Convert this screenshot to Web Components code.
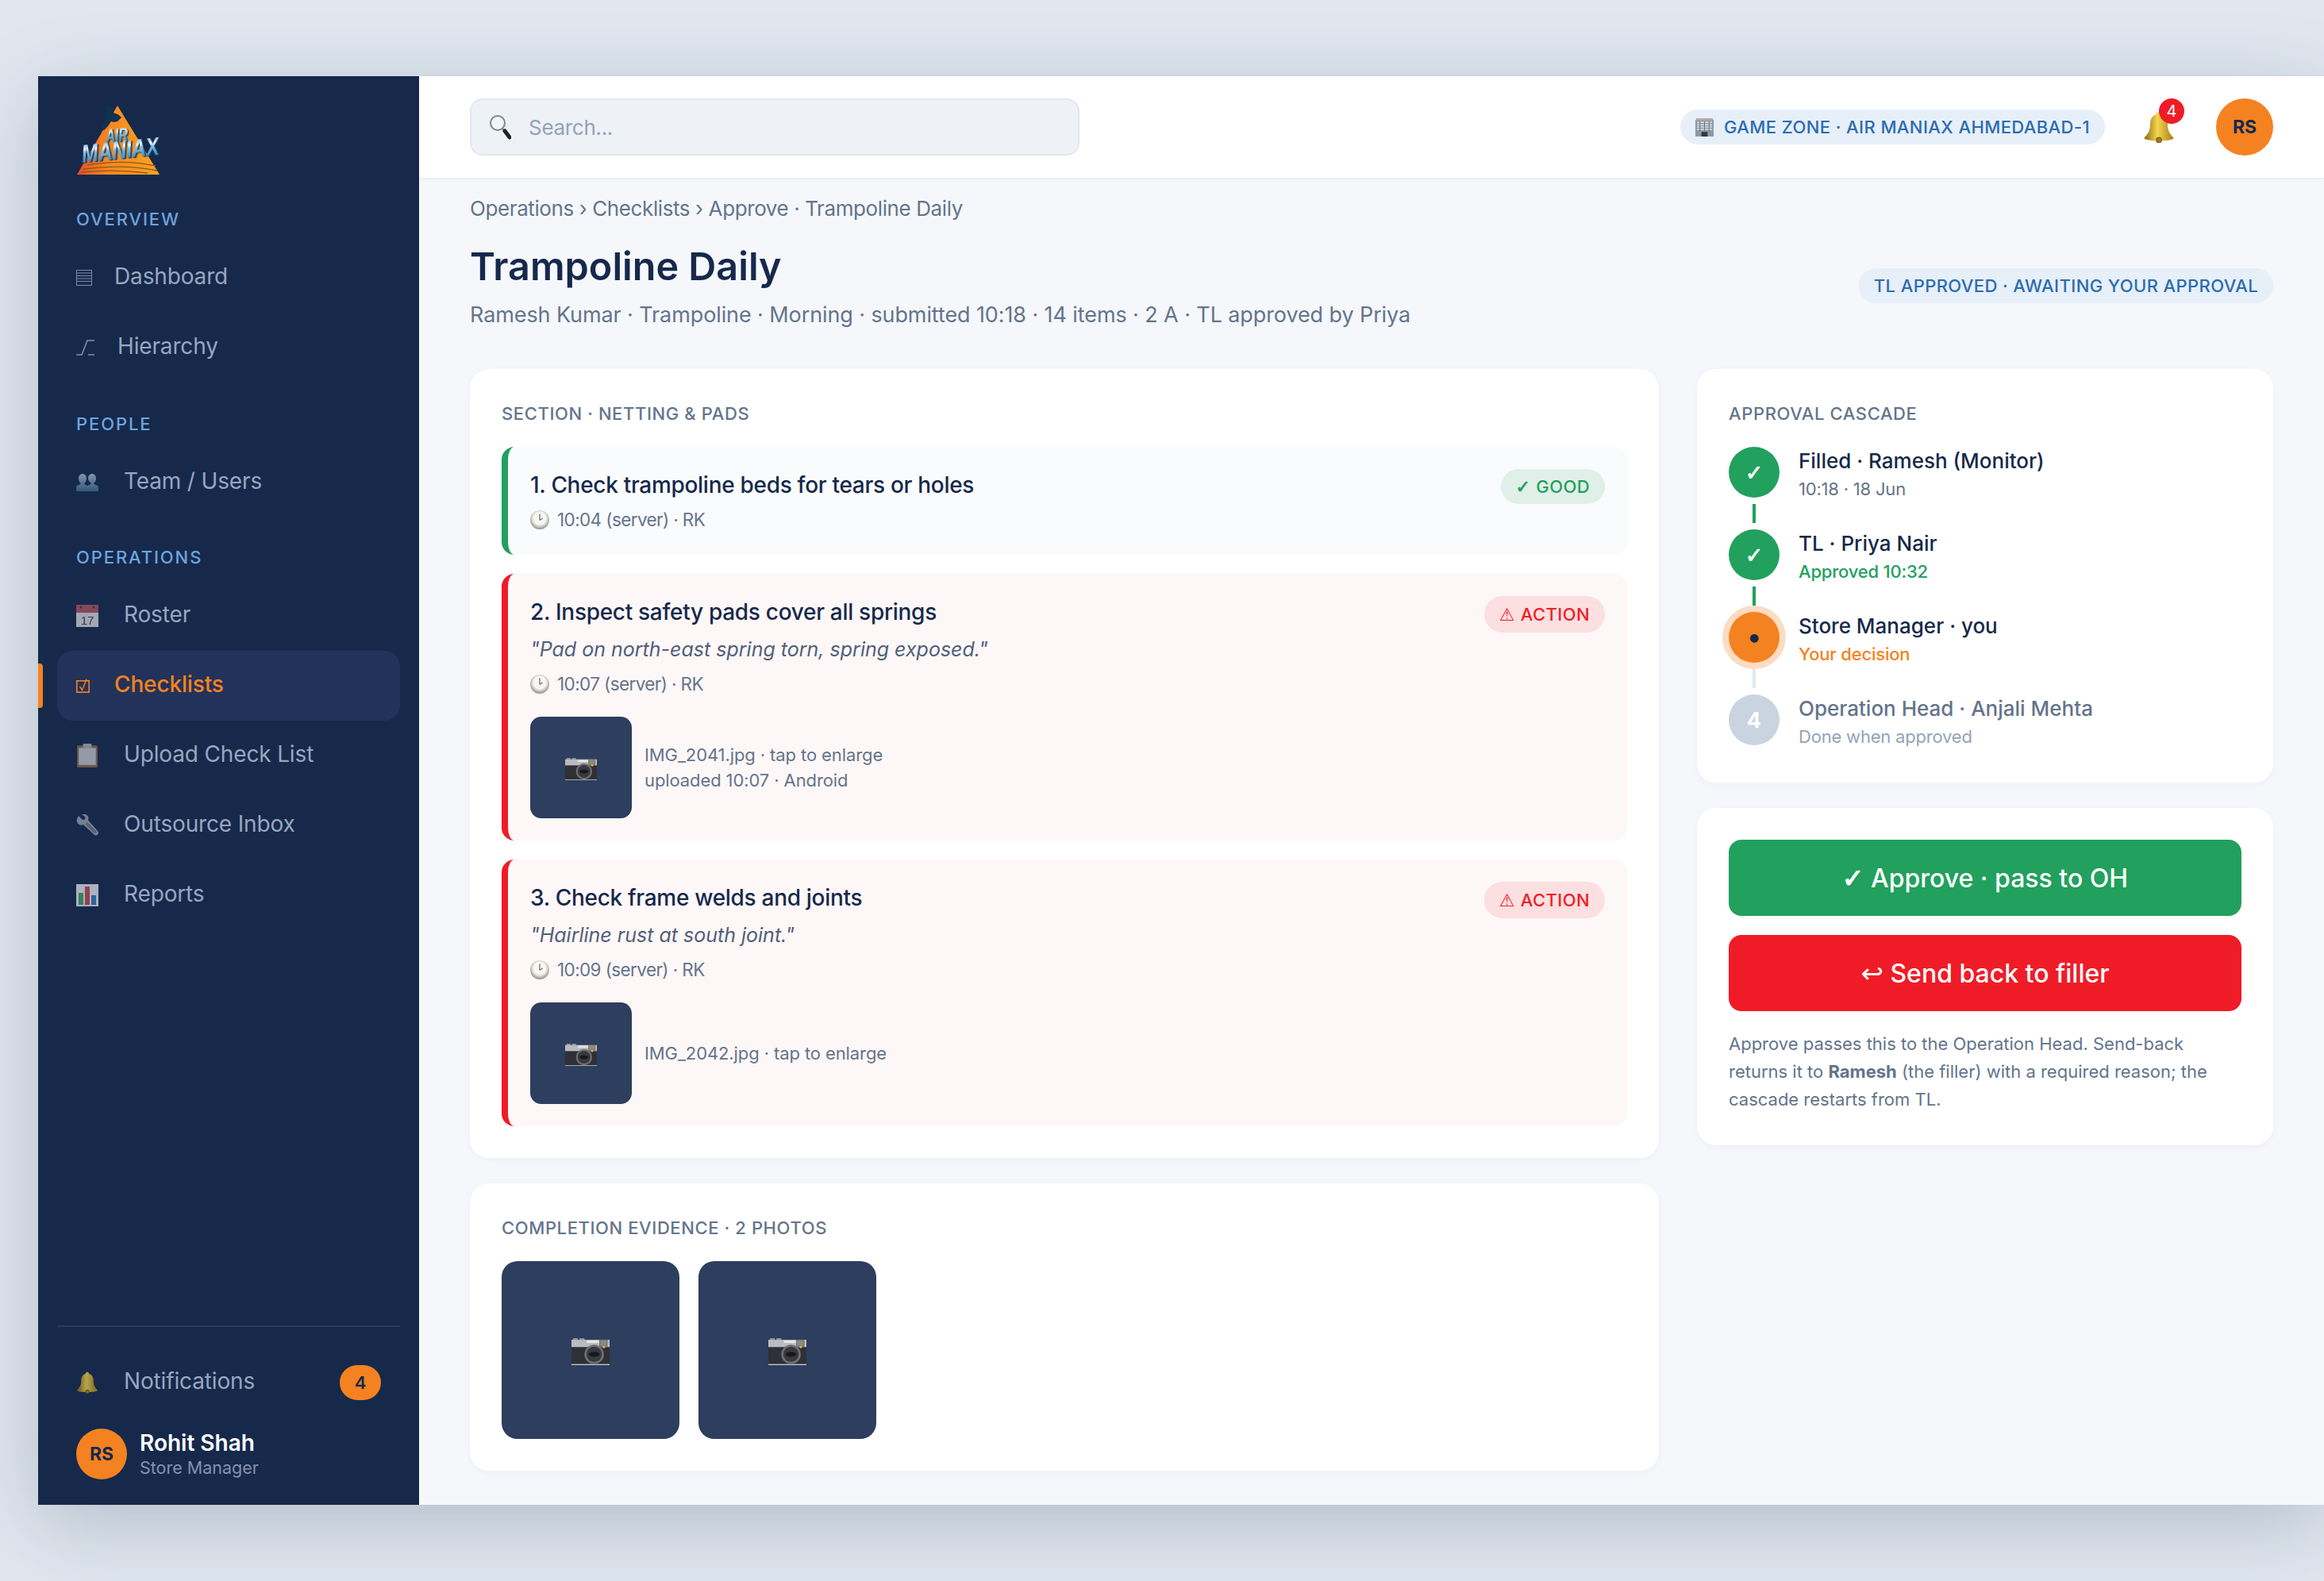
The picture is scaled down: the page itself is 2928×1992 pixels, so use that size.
<!DOCTYPE html>
<html lang="en">
<head>
<meta charset="utf-8">
<title>Trampoline Daily</title>
<style>
html, body { margin: 0; height: 1992px; overflow: hidden; }
body {
    background: #e0e7ef;
    font-family: "Inter", "Liberation Sans", sans-serif;
    color: #16294b;
}
</style>
</head>
<body>
<am-shell>
    <am-sidebar slot="side">
        <am-logo></am-logo>
        <am-nav-label>OVERVIEW</am-nav-label>
        <am-nav-item icon="dash" iw="28">Dashboard</am-nav-item>
        <am-nav-item icon="tree" iw="32">Hierarchy</am-nav-item>
        <am-nav-label>PEOPLE</am-nav-label>
        <am-nav-item icon="people">Team / Users</am-nav-item>
        <am-nav-label style="margin-top:38px">OPERATIONS</am-nav-label>
        <am-nav-item icon="calendar">Roster</am-nav-item>
        <am-nav-item icon="checkbox" iw="28" draw="18" active>Checklists</am-nav-item>
        <am-nav-item icon="clipboard">Upload Check List</am-nav-item>
        <am-nav-item icon="wrench">Outsource Inbox</am-nav-item>
        <am-nav-item icon="chart">Reports</am-nav-item>
        <am-nav-item slot="foot" icon="bell" badge="4">Notifications</am-nav-item>
        <am-user slot="foot" name="Rohit Shah" role="Store Manager"></am-user>
    </am-sidebar>

    <am-topbar slot="top">
        <am-pill slot="zone" tone="blue"><am-icon name="building" size="23" style="margin-right:13px"></am-icon>GAME ZONE · AIR MANIAX AHMEDABAD-1</am-pill>
    </am-topbar>

    <am-page-head crumbs="Operations › Checklists › Approve · Trampoline Daily" heading="Trampoline Daily" sub="Ramesh Kumar · Trampoline · Morning · submitted 10:18 · 14 items · 2 A · TL approved by Priya">
        <am-pill slot="status" tone="blue">TL APPROVED · AWAITING YOUR APPROVAL</am-pill>
    </am-page-head>

    <am-columns>
        <am-card heading="SECTION · NETTING &amp; PADS">
            <am-check-item tone="good" heading="1. Check trampoline beds for tears or holes" meta="10:04 (server) · RK"></am-check-item>
            <am-check-item tone="action" heading="2. Inspect safety pads cover all springs" quote="&quot;Pad on north-east spring torn, spring exposed.&quot;" meta="10:07 (server) · RK">
                <am-photo-row>IMG_2041.jpg · tap to enlarge<br>uploaded 10:07 · Android</am-photo-row>
            </am-check-item>
            <am-check-item tone="action" heading="3. Check frame welds and joints" quote="&quot;Hairline rust at south joint.&quot;" meta="10:09 (server) · RK">
                <am-photo-row>IMG_2042.jpg · tap to enlarge</am-photo-row>
            </am-check-item>
        </am-card>

        <am-card heading="COMPLETION EVIDENCE · 2 PHOTOS">
            <am-photo-grid></am-photo-grid>
        </am-card>

        <am-card slot="side" heading="APPROVAL CASCADE" style="--card-bottom:42px">
            <am-step state="done" heading="Filled · Ramesh (Monitor)" sub="10:18 · 18 Jun"></am-step>
            <am-step state="done" heading="TL · Priya Nair" sub="Approved 10:32"></am-step>
            <am-step state="current" heading="Store Manager · you" sub="Your decision"></am-step>
            <am-step state="todo" heading="Operation Head · Anjali Mehta" sub="Done when approved" mark="4" last></am-step>
        </am-card>

        <am-card slot="side">
            <am-action tone="green"><span style="font-family:'DejaVu Sans';font-size:33px;-webkit-text-stroke:1.2px #fff">✓</span> Approve · pass to OH</am-action>
            <am-action tone="red"><span style="font-family:'DejaVu Sans';font-size:34px">↩</span> Send back to filler</am-action>
            <am-note>Approve passes this to the Operation Head. Send-back<br>returns it to <b>Ramesh</b> (the filler) with a required reason; the<br>cascade restarts from TL.</am-note>
        </am-card>
    </am-columns>
</am-shell>

<script>
const ICONS = {
    dash: `<svg viewBox="0 0 20 20" fill="none" stroke="#a3b0c7" stroke-width="1"><rect x=".5" y=".5" width="19" height="19"/><path d="M1 4h18M1 7.500h18M1 11h18M1 14.500h18"/></svg>`,
    tree: `<svg viewBox="0 0 24 20" fill="none" stroke="#aab6cb" stroke-width="1.600"><path d="M0 19h7L14 1h9M15 19h8"/></svg>`,
    people: `<svg viewBox="0 0 28 24"><defs><linearGradient id="g" x1="0" y1="0" x2="0" y2="1"><stop offset="0" stop-color="#a9bed2"/><stop offset="1" stop-color="#3f6a8e"/></linearGradient></defs><g fill="url(#g)"><path d="M8 1c3 0 5 2.500 5 6 0 2.500-1 4.500-2.500 5.500v1.500L14 16c1 .8 1 4 1 7H0c0-3 0-6 1-7l4.500-2v-1.500C4 11.500 3 9.500 3 7c0-3.500 2-6 5-6z"/><path d="M20 1c3 0 5 2.500 5 6 0 2.500-1 4.500-2.500 5.500v1.500l4.500 2c1 .8 1 4 1 7H13c0-3 0-6 1-7l4.500-2v-1.500C17 11.500 15 9.500 15 7c0-3.500 2-6 5-6z"/></g></svg>`,
    calendar: `<svg viewBox="0 0 28 28"><rect width="28" height="28" fill="#d8d9dc"/><rect width="28" height="10" fill="#b2535f"/><circle cx="6" cy="3" r="1.500" fill="#33405c"/><circle cx="22" cy="3" r="1.500" fill="#33405c"/><text x="14" y="25" font-family="Liberation Sans" font-size="15" text-anchor="middle" fill="#3a3f48">17</text></svg>`,
    checkbox: `<svg viewBox="0 0 18 18" fill="none" stroke="#f58220"><rect x=".8" y="2.800" width="15.400" height="14.400" stroke-width="1.600"/><path d="M4.500 10l3 4.500L13 .8" stroke-width="1.400"/></svg>`,
    clipboard: `<svg viewBox="0 0 26 28"><rect x="1" y="2" width="24" height="26" rx="2" fill="#8b6a48"/><rect x="3" y="5" width="20" height="20" fill="#c3c6cc"/><rect x="8" y="0" width="10" height="5" rx="1" fill="#aab0b8"/></svg>`,
    wrench: `<svg viewBox="0 0 28 28"><path d="M3 2l5 5 3-.5.500-3L7 0c3-1 7 0 8 3 .8 2 .5 3.500 0 4.500L27 21c1.500 1.700 1 3.500 0 4.500s-3 1.500-4.500 0L9 13c-2 1-4.500.8-6.500-1C.5 10 0 6 3 2z" fill="#9aa1ad"/><path d="M14 10l12 12-2.500 2.500-12-12z" fill="#6d7582"/></svg>`,
    chart: `<svg viewBox="0 0 28 28"><rect width="28" height="28" fill="#e4e7eb"/><rect x="3" y="11" width="6" height="15" fill="#3fa35f"/><rect x="11" y="3" width="6" height="23" fill="#c64a50"/><rect x="19" y="14" width="6" height="12" fill="#3b78c2"/></svg>`,
    bell: `<svg viewBox="0 0 40 40"><defs><linearGradient id="g" x1="0" y1="0" x2="1" y2="0"><stop offset="0" stop-color="#8a6a10"/><stop offset=".45" stop-color="#f5d64e"/><stop offset="1" stop-color="#a47f14"/></linearGradient></defs><path d="M20 1c2 0 3 1 3 3 5 1.500 8 6 8 12 0 8 2 12 7 17 1 1.500 0 2-1 2.500-5 1.500-12 2-17 2s-12-.5-17-2c-1-.5-2-1-1-2.500 5-5 7-9 7-17 0-6 3-10.500 8-12 0-2 1-3 3-3z" fill="url(#g)"/><circle cx="20" cy="36.500" r="3.500" fill="#a47b18" stroke="#6d5210"/></svg>`,
    search: `<svg viewBox="0 0 28 32" fill="none"><circle cx="11" cy="11" r="9" fill="#f3f5f8" stroke="#7c8694" stroke-width="2"/><path d="M17 18l3 4" stroke="#8b8f96" stroke-width="2.500"/><path d="M20 21l6 8" stroke="#1f2328" stroke-width="5" stroke-linecap="round"/></svg>`,
    building: `<svg viewBox="0 0 24 24"><rect y="2" width="24" height="22" fill="#8c99a5"/><rect x="1" width="22" height="3" fill="#b9a99a"/><path d="M2 5.500h20M2 8.500h20M2 11.500h20M2 14.500h20" stroke="#dde4ea" stroke-width="1.600"/><path d="M6 4v13M12 4v13M18 4v13" stroke="#5f6d7a" stroke-width="1"/><rect x="8" y="18" width="8" height="6" fill="#2d3945"/></svg>`,
    clock: `<svg viewBox="0 0 24 24"><defs><radialGradient id="g" cx=".5" cy=".42" r=".58"><stop offset=".55" stop-color="#f8f7f2"/><stop offset="1" stop-color="#8f8f8a"/></radialGradient></defs><circle cx="12" cy="12" r="12" fill="url(#g)"/><path d="M12 12.500V4.500M12 12.500l3.500-2.500" stroke="#6f7278" stroke-width="1.300" fill="none"/></svg>`,
    camera: `<svg viewBox="0 0 47 34"><rect x="2" y="0" width="6" height="5" fill="#8d9096"/><rect x="10" y="0" width="6" height="5" fill="#8d9096"/><rect y="2" width="47" height="10" fill="#b9bbc0"/><rect x="19" y="3" width="15" height="3" fill="#e6e6e4"/><rect y="11" width="47" height="22" fill="#2f3035"/><rect y="32" width="47" height="2" fill="#c9cbcf"/><rect x="35" y="2" width="9" height="8" fill="#8e8a80" stroke="#5b5a57" stroke-width=".8"/><circle cx="40" cy="11" r="1.500" fill="#f2b824"/><circle cx="28" cy="20" r="12" fill="#6e7075"/><circle cx="28" cy="20" r="9.500" fill="#38393e"/><ellipse cx="28" cy="20" rx="6.500" ry="3" fill="#17181b"/></svg>`
};

class Base extends HTMLElement {
    constructor() {
        super();
        this.attachShadow({ mode: 'open' });
    }
    connectedCallback() {
        this._render();
    }
    attr(name, fallback = '') {
        return this.hasAttribute(name) ? this.getAttribute(name) : fallback;
    }
}

class AmIcon extends Base {
    _render() {
        const name = this.attr('name');
        const size = this.attr('size', 28);
        this.shadowRoot.innerHTML = `<style>
        :host { display: inline-flex; flex: none; width: ${size}px; }
        svg { display: block; width: 100%; height: auto; }
        </style>${ICONS[name] || ''}`;
    }
}

class AmShell extends Base {
    _render() {
        this.shadowRoot.innerHTML = `<style>
        :host {
            display: grid;
            grid-template-columns: 480px 1fr;
            margin: 96px 0 0 48px;
            height: 1800px;
            box-shadow: 0 24px 96px rgba(22,41,75,.22);
        }
        main {
            background: #f5f7fb;
            display: flex;
            flex-direction: column;
            min-width: 0;
        }
        .body { padding: 0 64px; display: flex; flex-direction: column; }
        </style>
        <slot name="side"></slot>
        <main>
            <slot name="top"></slot>
            <div class="body"><slot></slot></div>
        </main>`;
    }
}

class AmSidebar extends Base {
    _render() {
        this.shadowRoot.innerHTML = `<style>
        :host {
            display: flex;
            flex-direction: column;
            background: #16294b;
            padding: 32px 24px 32px;
            box-sizing: border-box;
            height: 1800px;
        }
        .foot {
            margin-top: auto;
            border-top: 2px solid #2a3b5e;
            padding-top: 26px;
            display: flex;
            flex-direction: column;
        }
        </style>
        <slot></slot>
        <div class="foot"><slot name="foot"></slot></div>`;
    }
}

class AmLogo extends Base {
    _render() {
        this.shadowRoot.innerHTML = `<style>
        :host { display: block; margin-left: 24px; padding-top: 2px; height: 94px; }
        svg { display: block; width: 112px; height: 94px; }
        text { filter: drop-shadow(2px 1.500px 0 #0e3454); }
        </style>
        <svg viewBox="0 0 112 94">
            <defs>
                <linearGradient id="tri" x1="0" y1="0" x2="1" y2="0">
                    <stop offset="0" stop-color="#ee4a2b"/><stop offset=".35" stop-color="#f6851f"/><stop offset="1" stop-color="#fca41e"/>
                </linearGradient>
                <linearGradient id="blue" x1="0" y1="0" x2="0" y2="1">
                    <stop offset="0" stop-color="#3c97d6"/><stop offset=".34" stop-color="#f2fbff"/><stop offset=".46" stop-color="#7fc3ea"/><stop offset="1" stop-color="#1d6ba3"/>
                </linearGradient>
            </defs>
            <path d="M52 3L105 90H1z" fill="url(#tri)"/>
            <path d="M39 3c3-1 7 0 7 4l1 5c3 1 8 3 10 6l-5 5c-3 1-6 1-8 0l-4 6-5 5-3-3 4-9 1-10c0-4 0-8 2-9z" fill="#12304f"/>
            <path d="M14 78c30-5 60-5 86 1M9 83c30-4 64-4 93 2M6 87c30-3 60-2 84 1" stroke="#8b5a1f" stroke-width="1.300" fill="none"/>
            <g font-family="Liberation Sans" font-weight="700" font-style="italic" fill="url(#blue)">
                <text font-size="24" transform="translate(38 50) rotate(-5) scale(.68 1)">AIR</text>
                <text font-size="31" transform="translate(8 75) rotate(-6) scale(.8 1)">MANIAX</text>
            </g>
        </svg>`;
    }
}

class AmNavLabel extends Base {
    _render() {
        this.shadowRoot.innerHTML = `<style>
        :host {
            display: block;
            margin: 40px 0 18px 24px;
            font-size: 22px;
            line-height: 24px;
            font-weight: 500;
            letter-spacing: 1.900px;
            color: #6ea4de;
        }
        </style><slot></slot>`;
    }
}

class AmNavItem extends Base {
    _render() {
        const active = this.hasAttribute('active');
        const iw = this.attr('iw', 40);
        const draw = this.attr('draw', iw == 40 ? 28 : (iw == 32 ? 24 : 20));
        const badge = this.attr('badge');
        this.shadowRoot.innerHTML = `<style>
        :host {
            display: flex;
            align-items: center;
            position: relative;
            height: 88px;
            padding: 0 24px;
            gap: 20px;
            border-radius: 20px;
            font-size: 28px;
            color: ${active ? '#f58220' : '#98a6bf'};
            font-weight: ${active ? 500 : 400};
            background: ${active ? '#23325a' : 'transparent'};
        }
        .ic { width: ${iw}px; flex: none; display: flex; opacity: ${active ? 1 : .72}; }
        .label { padding-bottom: 4px; letter-spacing: -.15px; }
        .bar {
            position: absolute; left: -24px; top: 16px; width: 6px; height: 56px;
            background: #f58220; border-radius: 0 4px 4px 0;
        }
        .badge {
            margin-left: auto;
            width: 52px; height: 44px; border-radius: 22px;
            background: #f58220; color: #16294b;
            font-size: 22px; font-weight: 600;
            display: flex; align-items: center; justify-content: center;
        }
        </style>
        ${active ? '<div class="bar"></div>' : ''}
        <div class="ic"><am-icon name="${this.attr('icon')}" size="${draw}"></am-icon></div>
        <span class="label"><slot></slot></span>
        ${badge ? `<div class="badge">${badge}</div>` : ''}`;
    }
}

class AmAvatar extends Base {
    _render() {
        const size = this.attr('size', 64);
        this.shadowRoot.innerHTML = `<style>
        :host {
            display: flex; flex: none;
            width: ${size}px; height: ${size}px;
            border-radius: 50%;
            align-items: center; justify-content: center;
            background: #f58220; color: #16294b;
            font-size: 23px; font-weight: 700;
        }
        </style><slot></slot>`;
    }
}

class AmUser extends Base {
    _render() {
        this.shadowRoot.innerHTML = `<style>
        :host { display: flex; align-items: center; gap: 16px; margin: 14px 0 0 24px; }
        .n { font-size: 28px; line-height: 34px; font-weight: 600; color: #fff; }
        .r { font-size: 21.500px; line-height: 28px; color: #8492ab; }
        </style>
        <am-avatar>RS</am-avatar>
        <div><div class="n">${this.attr('name')}</div><div class="r">${this.attr('role')}</div></div>`;
    }
}

class AmPill extends Base {
    _render() {
        const tones = {
            blue: ['#e7eff9', '#2b6cb0'],
            good: ['#e0f0e8', '#22a05e'],
            action: ['#fbdfe1', '#ef1c27']
        };
        const [bg, fg] = tones[this.attr('tone', 'blue')];
        this.shadowRoot.innerHTML = `<style>
        :host {
            display: inline-flex; align-items: center; flex: none;
            height: 44px; padding: 0 19px;
            border-radius: 23px;
            background: ${bg}; color: ${fg};
            font-size: 22px; font-weight: 500;
            letter-spacing: .4px;
            white-space: nowrap;
        }
        :host([tone="action"]) { height: 46px; }
        </style><slot></slot>`;
    }
}

class AmTopbar extends Base {
    _render() {
        this.shadowRoot.innerHTML = `<style>
        :host {
            display: flex; align-items: center;
            height: 128px;
            padding: 0 64px;
            box-sizing: border-box;
            background: #fff;
            box-shadow: 0 1px 4px rgba(22,41,75,.08);
            position: relative;
        }
        .search {
            width: 768px; height: 72px; box-sizing: border-box;
            display: flex; align-items: center; gap: 22px;
            padding-left: 22px;
            background: #eef1f6;
            border: 2px solid #e2e8f0;
            border-radius: 16px;
            color: #94a3b8;
            font-size: 26px;
            letter-spacing: -.3px;
        }
        .right { margin-left: auto; display: flex; align-items: center; }
        .bell { position: relative; display: flex; margin: 0 52px 0 48px; }
        .dot {
            position: absolute; left: 20px; top: -16px;
            width: 32px; height: 32px; border-radius: 50%;
            background: #ef1c27; color: #fff;
            font-size: 20px;
            display: flex; align-items: center; justify-content: center;
        }
        </style>
        <div class="search"><am-icon name="search" size="28"></am-icon><span>Search...</span></div>
        <div class="right">
            <slot name="zone"></slot>
            <div class="bell"><am-icon name="bell" size="40"></am-icon><div class="dot">4</div></div>
            <am-avatar size="72">RS</am-avatar>
        </div>`;
    }
}

class AmPageHead extends Base {
    _render() {
        this.shadowRoot.innerHTML = `<style>
        :host { display: block; padding: 20px 0 49px; }
        .crumb { font-size: 26px; line-height: 38px; letter-spacing: -.4px; color: #64748b; }
        .row { display: flex; align-items: center; justify-content: space-between; margin-top: 22px; }
        h1 { margin: 0; font-size: 48.500px; line-height: 64px; font-weight: 600; color: #16294b; }
        .sub { font-size: 27px; line-height: 38px; letter-spacing: -.1px; margin-top: 10px; color: #64748b; }
        </style>
        <div class="crumb">${this.attr('crumbs')}</div>
        <div class="row">
            <div><h1>${this.attr('heading')}</h1><div class="sub">${this.attr('sub')}</div></div>
            <slot name="status"></slot>
        </div>`;
    }
}

class AmColumns extends Base {
    _render() {
        this.shadowRoot.innerHTML = `<style>
        :host { display: grid; grid-template-columns: 1fr 726px; gap: 48px; align-items: start; }
        .col { display: flex; flex-direction: column; gap: 32px; min-width: 0; }
        </style>
        <div class="col"><slot></slot></div>
        <div class="col"><slot name="side"></slot></div>`;
    }
}

class AmCard extends Base {
    _render() {
        const heading = this.attr('heading');
        this.shadowRoot.innerHTML = `<style>
        :host {
            display: block;
            background: #fff;
            border-radius: 24px;
            padding: 40px 40px var(--card-bottom, 40px);
            box-shadow: 0 2px 8px rgba(22,41,75,.04);
        }
        h2 {
            margin: 0 0 26px;
            font-size: 22px; line-height: 32px;
            font-weight: 500;
            letter-spacing: .6px;
            color: #64748b;
        }
        </style>
        ${heading ? `<h2>${heading}</h2>` : ''}
        <slot></slot>`;
    }
}

class AmCheckItem extends Base {
    _render() {
        const tone = this.attr('tone');
        const good = tone == 'good';
        const quote = this.attr('quote');
        this.shadowRoot.innerHTML = `<style>
        :host {
            display: block;
            position: relative;
            margin-bottom: 24px;
            padding: 28px 28px 28px;
            border-left: 8px solid ${good ? '#22a05e' : '#ef1c27'};
            border-radius: 16px;
            background: ${good ? '#fafbfd' : '#fef7f7'};
        }
        :host(:last-child) { margin-bottom: 0; }
        .tag { position: absolute; right: 28px; top: 28px; }
        .g { font-family: "DejaVu Sans"; margin-right: 7px; }
        .ok { -webkit-text-stroke: .8px #22a05e; }
        .t { font-size: 28px; line-height: 40px; letter-spacing: -.3px; font-weight: 500; color: #16294b; }
        .q { font-size: 25px; line-height: 36px; margin-top: 9px; padding-bottom: 2px; font-style: italic; color: #51607a; }
        .m { display: flex; align-items: center; gap: 10px; margin-top: 8px; font-size: 22.500px; line-height: 32px; letter-spacing: -.6px; color: #64748b; }
        </style>
        <am-pill class="tag" tone="${tone}"><span class="g ${good ? 'ok' : ''}">${good ? '✓' : '⚠'}</span>${good ? 'GOOD' : 'ACTION'}</am-pill>
        <div class="t">${this.attr('heading')}</div>
        ${quote ? `<div class="q">${quote}</div>` : ''}
        <div class="m"><am-icon name="clock" size="24"></am-icon><span>${this.attr('meta')}</span></div>
        <slot></slot>`;
    }
}

class AmThumb extends Base {
    _render() {
        const size = this.attr('size', 128);
        this.shadowRoot.innerHTML = `<style>
        :host {
            display: flex; flex: none;
            width: ${size}px; height: ${size}px;
            align-items: center; justify-content: center;
            border-radius: ${size > 128 ? 20 : 14}px;
            background: #2d3e5e;
        }
        am-icon { margin-top: 4px; }
        </style><am-icon name="camera" size="${size > 128 ? 48 : 40}"></am-icon>`;
    }
}

class AmPhotoRow extends Base {
    _render() {
        this.shadowRoot.innerHTML = `<style>
        :host {
            display: flex; align-items: center; gap: 16px;
            margin-top: 25px;
            font-size: 22px; line-height: 32px; letter-spacing: -.1px; color: #64748b;
        }
        </style><am-thumb></am-thumb><div><slot></slot></div>`;
    }
}

class AmPhotoGrid extends Base {
    _render() {
        this.shadowRoot.innerHTML = `<style>
        :host { display: flex; gap: 24px; margin-top: 2px; }
        </style><am-thumb size="224"></am-thumb><am-thumb size="224"></am-thumb>`;
    }
}

class AmStep extends Base {
    _render() {
        const state = this.attr('state');
        const last = this.hasAttribute('last');
        const colors = { done: '#22a05e', current: '#f58220', todo: '#cad4e1' };
        const subs = { done: '#64748b', current: '#f58220', todo: '#94a3b8' };
        const mark = state == 'done' ? '✓' : state == 'current' ? '●' : this.attr('mark');
        const green = this.attr('sub').startsWith('Approved');
        this.shadowRoot.innerHTML = `<style>
        :host { display: grid; grid-template-columns: 64px 1fr; column-gap: 24px; }
        .rail { display: flex; flex-direction: column; align-items: center; }
        .dot {
            width: 64px; height: 64px; border-radius: 50%; flex: none;
            display: flex; align-items: center; justify-content: center;
            background: ${colors[state]};
            color: ${state == 'current' ? '#16294b' : '#fff'};
            ${state == 'todo' ? '' : 'font-family: "DejaVu Sans";'}
            font-size: ${state == 'current' ? 14 : 27}px;
            font-weight: ${state == 'todo' ? 700 : 400};
            ${state == 'current' ? 'box-shadow: 0 0 0 8px #fddcc2;' : ''}
            ${state == 'done' ? '-webkit-text-stroke: .8px #fff;' : ''}
        }
        .line { width: 4px; height: 24px; margin: 8px 0; background: ${state == 'done' ? '#22a05e' : '#e2e8f0'}; }
        .t { font-size: 26px; line-height: 36px; font-weight: 500; color: ${state == 'todo' ? '#64748b' : '#16294b'}; }
        .s { font-size: 22px; line-height: 32px; margin-top: 1px; letter-spacing: -.2px; font-weight: ${state == 'current' || green ? 500 : 400}; color: ${green ? '#22a05e' : subs[state]}; }
        </style>
        <div class="rail"><div class="dot">${mark}</div>${last ? '' : '<div class="line"></div>'}</div>
        <div><div class="t">${this.attr('heading')}</div><div class="s">${this.attr('sub')}</div></div>`;
    }
}

class AmAction extends Base {
    _render() {
        const red = this.attr('tone') == 'red';
        this.shadowRoot.innerHTML = `<style>
        :host {
            display: flex; align-items: center; justify-content: center;
            height: 96px; margin-top: ${red ? 24 : 0}px;
            border-radius: 16px;
            background: ${red ? '#ef1c27' : '#22a05e'};
            color: #fff;
            font-size: 32px; font-weight: 500;
            white-space: pre;
        }
        </style><slot></slot>`;
    }
}

class AmNote extends Base {
    _render() {
        this.shadowRoot.innerHTML = `<style>
        :host { display: block; margin-top: 24px; font-size: 22px; line-height: 35px; color: #64748b; white-space: nowrap; }
        </style><slot></slot>`;
    }
}

customElements.define('am-icon', AmIcon);
customElements.define('am-avatar', AmAvatar);
customElements.define('am-pill', AmPill);
customElements.define('am-thumb', AmThumb);
customElements.define('am-shell', AmShell);
customElements.define('am-sidebar', AmSidebar);
customElements.define('am-logo', AmLogo);
customElements.define('am-nav-label', AmNavLabel);
customElements.define('am-nav-item', AmNavItem);
customElements.define('am-user', AmUser);
customElements.define('am-topbar', AmTopbar);
customElements.define('am-page-head', AmPageHead);
customElements.define('am-columns', AmColumns);
customElements.define('am-card', AmCard);
customElements.define('am-check-item', AmCheckItem);
customElements.define('am-photo-row', AmPhotoRow);
customElements.define('am-photo-grid', AmPhotoGrid);
customElements.define('am-step', AmStep);
customElements.define('am-action', AmAction);
customElements.define('am-note', AmNote);
</script>
</body>
</html>
